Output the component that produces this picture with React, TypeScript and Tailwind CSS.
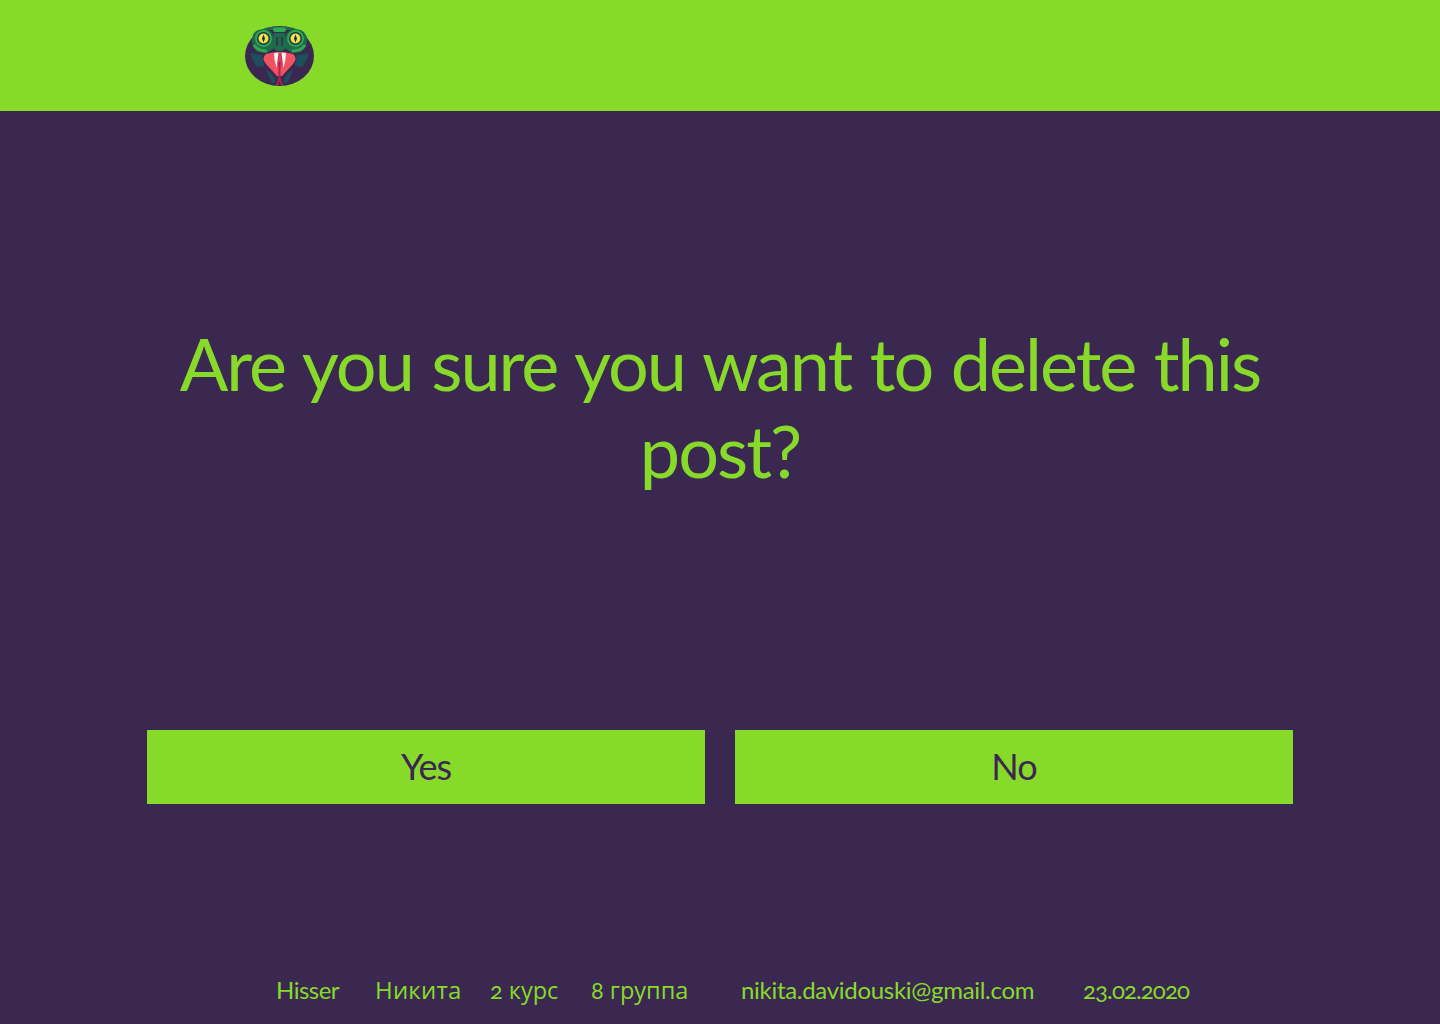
const SnakeLogo = () => (
  <svg width="69" height="60" viewBox="0 0 69 60" aria-label="Hisser logo">
    <ellipse cx="34.5" cy="30" rx="34.5" ry="30" fill="#3a2850" />
    {/* teal cheeks */}
    <path d="M5 27 L17 29 L19 40 L12 41 Q7 35 5 27Z" fill="#1c4f5c" />
    <path d="M64 27 L52 29 L50 40 L57 41 Q62 35 64 27Z" fill="#1c4f5c" />
    <path d="M21 43 L27 48 L31 56 L27 57 Q23 50 21 43Z" fill="#1c4f5c" />
    <path d="M48 43 L42 48 L38 56 L42 57 Q46 50 48 43Z" fill="#1c4f5c" />
    {/* head */}
    <path d="M17 4 L52 4 Q50 1.5 43 1 Q34.5 0 26 1 Q19 1.5 17 4Z" fill="#1e6a4c" />
    <rect x="28" y="1.5" width="13" height="4.5" rx="2.2" fill="#2fa850" />
    <path d="M7 14 Q7 4 18 3 Q28 3 29 13 L29 22 L22 27 L13 26 Q7 22 7 14Z" fill="#1e6a4c" />
    <path d="M62 14 Q62 4 51 3 Q41 3 40 13 L40 22 L47 27 L56 26 Q62 22 62 14Z" fill="#1e6a4c" />
    <path d="M29 7 L40 7 L41 22 L37 25 L32 25 L28 22Z" fill="#1e6a4c" />
    <path d="M32 11 L32 20 M37 11 L37 20" stroke="#3a2850" strokeWidth="1.5" />
    {/* green bands round the eyes */}
    <path d="M9 19 Q13 25 22 25" fill="none" stroke="#2fa850" strokeWidth="3" />
    <path d="M60 19 Q56 25 47 25" fill="none" stroke="#2fa850" strokeWidth="3" />
    <circle cx="18.5" cy="12.5" r="8.5" fill="#2fa850" />
    <circle cx="50.5" cy="12.5" r="8.5" fill="#2fa850" />
    {/* eyes */}
    <circle cx="18.5" cy="12.5" r="6.5" fill="#2b2a48" />
    <circle cx="50.5" cy="12.5" r="6.5" fill="#2b2a48" />
    <circle cx="18.5" cy="12.5" r="5" fill="#e6e84a" />
    <circle cx="50.5" cy="12.5" r="5" fill="#e6e84a" />
    <path d="M18.5 8.5 L20 12.5 L18.5 16.5 L17 12.5Z" fill="#2b2440" />
    <path d="M50.5 8.5 L52 12.5 L50.5 16.5 L49 12.5Z" fill="#2b2440" />
    {/* mouth */}
    <path d="M21 28 Q34.5 24 48 28 Q53 32 48 38 L37 50 L32 50 L21 38 Q16 32 21 28Z" fill="#ef5361" />
    {/* fangs and throat */}
    <path d="M31 27 L38 27 L37 38 L35 44 L33 38Z" fill="#d23a5a" />
    <path d="M29 27 L33.5 26.5 L31.5 42 Q29 34 29 27Z" fill="#f7f3f2" />
    <path d="M41 27 L36.5 26.5 L38.5 42 Q41 34 41 27Z" fill="#f7f3f2" />
    {/* tongue */}
    <path d="M33.5 36 L35.5 36 L35.5 52 L38 59 L36 59 L34.5 55 L33 59 L31 59 L33.5 52Z" fill="#b51d4a" />
  </svg>
);

export default function App() {
  return (
    <div className="flex h-[1024px] flex-col bg-[#3a2850] font-['Lato','Liberation_Sans',sans-serif] text-[#88da2a]">
      <header className="flex h-[111px] items-center bg-[#88da2a] pl-[245px]">
        <SnakeLogo />
      </header>
      <main className="flex flex-1 flex-col items-center">
        <h1 className="mt-[209px] w-[1146px] text-center text-[72px] leading-[87px] font-normal tracking-[-2px] [word-spacing:2px]">
          Are you sure you want to delete this post?
        </h1>
        <div className="mt-[236px] flex gap-[30px]">
          <button className="h-[74px] w-[558px] bg-[#88da2a] pb-[2px] text-[36px] tracking-[-1px] text-[#3a2850]">Yes</button>
          <button className="h-[74px] w-[558px] bg-[#88da2a] pb-[2px] text-[36px] tracking-[-1px] text-[#3a2850]">No</button>
        </div>
      </main>
      <footer className="flex h-[66px] items-baseline pl-[276px] pt-[17px] text-[24px] leading-[29px] oldstyle-nums">
        <span className="w-[99px] whitespace-nowrap tracking-[-0.5px]">Hisser</span>
        <span className="w-[115px] whitespace-nowrap font-['Open_Sans',sans-serif] text-[24px] tracking-[0.2px]">Никита</span>
        <span className="w-[101px] whitespace-nowrap font-['Open_Sans',sans-serif] text-[23.5px]">
          <span className="font-['Lato',sans-serif]">2</span> курс
        </span>
        <span className="w-[150px] whitespace-nowrap font-['Open_Sans',sans-serif] text-[23.5px]">
          <span className="font-['Lato',sans-serif]">8</span> группа
        </span>
        <span className="w-[342px] whitespace-nowrap tracking-[-0.3px]">nikita.davidouski@gmail.com</span>
        <span className="whitespace-nowrap tracking-[-0.9px]">23.02.2020</span>
      </footer>
    </div>
  );
}
